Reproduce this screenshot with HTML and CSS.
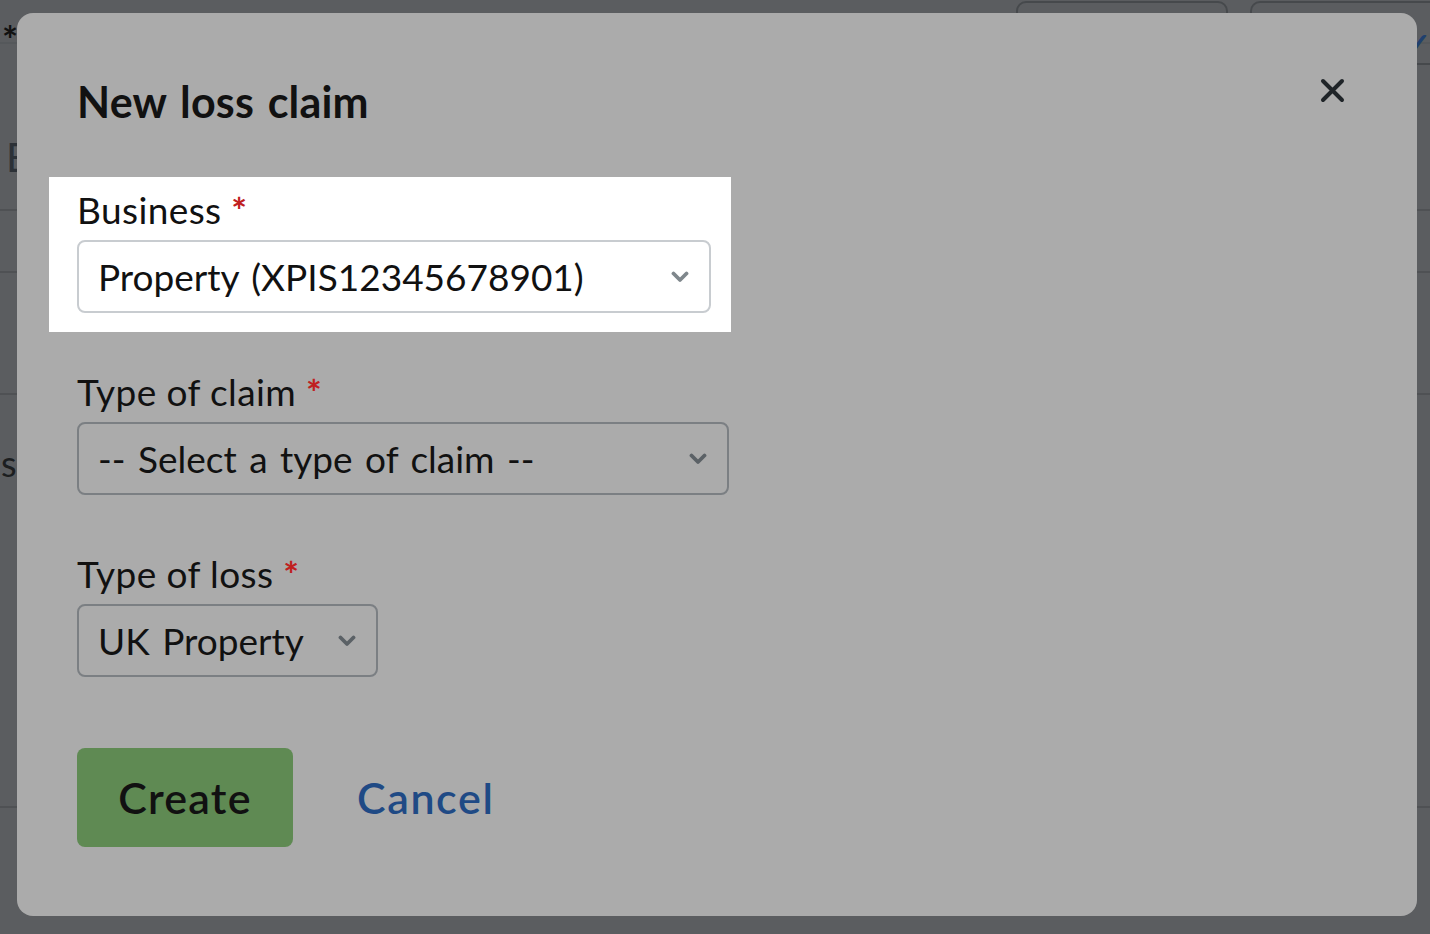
FILE: index.html
```html
<!DOCTYPE html>
<html lang="en">
<head>
    <meta charset="UTF-8">
    <meta name="viewport" content="width=device-width, initial-scale=1.0">
    <title>New loss claim</title>
    <link rel="stylesheet" href="styles.css">
</head>
<body>
    <!-- page behind the dialog, dimmed -->
    <div class="page">
        <div class="page-header">
            <span class="page-star">*</span>
            <div class="page-actions">
                <span class="ghost-btn"></span>
                <span class="ghost-btn ghost-btn-small"><span class="ghost-check">&#10003;</span></span>
            </div>
        </div>
        <div class="page-row page-row-name"><span class="page-letter">E</span></div>
        <div class="page-row page-row-thin"></div>
        <div class="page-row page-row-mid"></div>
        <div class="page-row page-row-tall"><span class="page-text">s</span></div>
    </div>

    <div class="modal">
        <div class="modal-header">
            <h1 class="modal-title">New loss claim</h1>
            <button class="close-btn" aria-label="Close">
                <svg width="25" height="25" viewBox="0 0 25 25">
                    <path d="M3 3 L22 22 M22 3 L3 22" stroke="#1f2428" stroke-width="4" stroke-linecap="round" fill="none"/>
                </svg>
            </button>
        </div>

        <div class="field field-spotlight">
            <label class="field-label">Business <span class="required">*</span></label>
            <div class="select select-business">
                <span class="select-value">Property (XPIS12345678901)</span>
                <svg class="chevron" width="18" height="12" viewBox="0 0 18 12">
                    <path d="M2.5 2.5 L9 9 L15.5 2.5" stroke="#7f878c" stroke-width="3.8" stroke-linecap="round" stroke-linejoin="round" fill="none"/>
                </svg>
            </div>
        </div>

        <div class="field">
            <label class="field-label">Type of claim <span class="required">*</span></label>
            <div class="select select-claim">
                <span class="select-value">-- Select a type of claim --</span>
                <svg class="chevron" width="18" height="12" viewBox="0 0 18 12">
                    <path d="M2.5 2.5 L9 9 L15.5 2.5" stroke="#5b6166" stroke-width="3.8" stroke-linecap="round" stroke-linejoin="round" fill="none"/>
                </svg>
            </div>
        </div>

        <div class="field">
            <label class="field-label">Type of loss <span class="required">*</span></label>
            <div class="select select-loss">
                <span class="select-value">UK Property</span>
                <svg class="chevron" width="18" height="12" viewBox="0 0 18 12">
                    <path d="M2.5 2.5 L9 9 L15.5 2.5" stroke="#5b6166" stroke-width="3.8" stroke-linecap="round" stroke-linejoin="round" fill="none"/>
                </svg>
            </div>
        </div>

        <div class="actions">
            <button class="create-btn">Create</button>
            <a href="#" class="cancel-link">Cancel</a>
        </div>
    </div>
</body>
</html>
```

FILE: styles.css
```css
body {
    margin: 0;
    font-family: Lato, "Noto Sans", sans-serif;
    background-color: #5b5d60;
    color: #111;
}

/* dimmed page */
.page {
    height: 934px;
    overflow: hidden;
    background-color: #5b5d60;
}

.page-header {
    display: flex;
    justify-content: space-between;
    height: 42px;
    border-bottom: 2px solid #55585b;
}

.page-star {
    font-size: 38px;
    font-weight: bold;
    line-height: 1;
    margin: 20px 0 0 2px;
    color: #111;
}

.page-actions {
    display: flex;
    gap: 22px;
}

.ghost-btn {
    display: block;
    width: 208px;
    height: 60px;
    margin-top: 1px;
    border: 2px solid #46494c;
    border-radius: 10px;
}

.ghost-btn-small {
    width: 178px;
    border-right: none;
    border-radius: 10px 0 0 10px;
    text-align: right;
}

.ghost-check {
    display: inline-block;
    margin-top: 22px;
    color: #20406e;
    font-size: 28px;
    font-weight: bold;
}

.page-row {
    border-bottom: 2px solid #4f5154;
}

.page-row-name {
    height: 165px;
}

.page-letter {
    display: inline-block;
    margin: 93px 0 0 6px;
    font-size: 40px;
    line-height: 1;
    color: #2c3137;
}

.page-row-thin {
    height: 60px;
}

.page-row-mid {
    height: 120px;
}

.page-row-tall {
    height: 411px;
}

.page-text {
    display: inline-block;
    margin: 46px 0 0 1px;
    font-size: 36px;
    color: #1c1e20;
}

/* dialog */
.modal {
    position: fixed;
    left: 17px;
    top: 13px;
    width: 1400px;
    height: 903px;
    box-sizing: border-box;
    padding: 64px 72px 0 60px;
    background-color: #ababab;
    border-radius: 16px;
}

.modal-header {
    display: flex;
    justify-content: space-between;
    align-items: flex-start;
    margin-bottom: 61px;
}

.modal-title {
    margin: 0;
    font-size: 43px;
    line-height: 50px;
    font-weight: bold;
    letter-spacing: 0.2px;
    word-spacing: 3px;
    color: #111;
}

.close-btn {
    margin-top: 1px;
    padding: 0;
    border: none;
    background: none;
    cursor: pointer;
}

.close-btn svg {
    display: block;
}

.field {
    margin-top: 57px;
}

.field-spotlight {
    width: 634px;
    margin: -11px -20px -19px -28px;
    padding: 11px 20px 19px 28px;
    background-color: #fff;
}

.field-label {
    display: block;
    font-size: 37px;
    line-height: 44px;
    letter-spacing: 0.4px;
    margin-bottom: 8px;
    color: #111;
}

.required {
    color: #c0201f;
    font-weight: bold;
}

.select {
    display: flex;
    justify-content: space-between;
    align-items: center;
    box-sizing: border-box;
    height: 73px;
    padding: 0 20px 0 19px;
    border: 2px solid #7b7f83;
    border-radius: 8px;
    font-size: 37px;
    word-spacing: 3px;
}

.select-business {
    width: 634px;
    border-color: #c8ccd0;
}

.select-claim {
    width: 652px;
}

.select-loss {
    width: 301px;
}

.chevron {
    display: block;
    flex-shrink: 0;
}

.actions {
    display: flex;
    align-items: center;
    gap: 64px;
    margin-top: 71px;
}

.create-btn {
    width: 216px;
    height: 99px;
    border: none;
    border-radius: 8px;
    background-color: #5f8a53;
    font-family: Lato, "Noto Sans", sans-serif;
    font-size: 43px;
    font-weight: 600;
    letter-spacing: 1.2px;
    color: #111;
    cursor: pointer;
}

.cancel-link {
    font-size: 43px;
    font-weight: 600;
    letter-spacing: 1.6px;
    color: #1f4a85;
    text-decoration: none;
}
```
